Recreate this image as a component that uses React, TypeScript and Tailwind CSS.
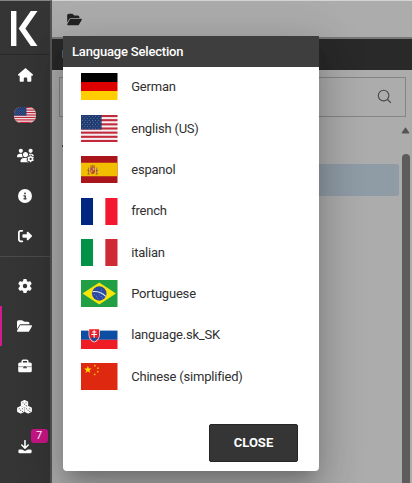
import React from "react";
import { FaHouse, FaUsersGear, FaCircleInfo, FaRightFromBracket, FaGear, FaFolderOpen } from "react-icons/fa6";

function UsFlag({ className }: { className: string }) {
  return (
    <svg className={className} viewBox="0 0 36 27" preserveAspectRatio="none">
      <rect width="36" height="27" fill="#f4f0f1" />
      {[0, 1, 2, 3, 4, 5, 6].map((i) => (
        <rect key={i} y={(i * 2 * 27) / 13} width="36" height={27 / 13} fill="#c2293c" />
      ))}
      <rect width="20.3" height="14.5" fill="#1f3a70" />
      {[0, 1, 2, 3, 4, 5, 6].map((r) =>
        [0, 1, 2, 3, 4, 5].map((c) => (
          <circle key={`${r}-${c}`} cx={1.6 + c * 3.2 + (r % 2) * 1.5} cy={1.4 + r * 1.95} r="0.45" fill="#a9b7d2" />
        ))
      )}
    </svg>
  );
}

const flagClass = "block h-[27px] w-[36.5px] shrink-0";

function Bands({ colors, vertical }: { colors: string[]; vertical?: boolean }) {
  return (
    <svg className={flagClass} viewBox="0 0 36 27" preserveAspectRatio="none">
      {colors.map((c, i) =>
        vertical ? (
          <rect key={i} x={i * 12} width="12" height="27" fill={c} />
        ) : (
          <rect key={i} y={i * 9} width="36" height="9" fill={c} />
        )
      )}
    </svg>
  );
}

function SpainFlag() {
  return (
    <svg className={flagClass} viewBox="0 0 36 27" preserveAspectRatio="none">
      <rect width="36" height="27" fill="#aa151b" />
      <rect y="6.75" width="36" height="13.5" fill="#f1bf00" />
      <path d="M9.2 11.3h4.6v4.2q0 2.4-2.3 2.7-2.3-.3-2.3-2.7z" fill="#b5483a" />
      <path d="M9.3 10.8l-.4-1.3 1.5.2 1.1-1 1.1 1 1.5-.2-.4 1.3z" fill="#a8622a" />
      <rect x="11.6" y="12" width="1.6" height="2.2" fill="#c9a5a0" />
      <rect x="9.8" y="14.3" width="1.5" height="2" fill="#d59b31" />
      <path d="M7.4 11.6v6.2M15.5 11.6v6.2" stroke="#9c7468" strokeWidth="1.1" />
      <path d="M6.3 14.3l2 .8M14.7 15.1l2-.8M6.5 18h2M14.5 18h2" stroke="#a63a2d" strokeWidth=".9" />
    </svg>
  );
}

function BrazilFlag() {
  return (
    <svg className={flagClass} viewBox="0 0 36 27" preserveAspectRatio="none">
      <rect width="36" height="27" fill="#229e45" />
      <path d="M1.5 13.5L18 2.6l16.5 10.9L18 24.4z" fill="#f8e509" />
      <circle cx="18" cy="13.5" r="7.2" fill="#2b49a3" />
      <path d="M11.4 11.6q7.7-.8 13 4.8" fill="none" stroke="#dbe8e8" strokeWidth="1.1" />
      <path d="M13 14.8h.8M14.8 16.2h.8M16.2 18.2h.8M19.4 16.5h.8M21 18h.8M18 14.7h.7M20 10.3h.7" stroke="#aebadb" strokeWidth=".7" />
    </svg>
  );
}

function SlovakFlag() {
  return (
    <svg className={flagClass} viewBox="0 0 36 27" preserveAspectRatio="none">
      <rect width="36" height="9" fill="#fff" />
      <rect y="8.6" width="36" height="9.2" fill="#0b4ea2" />
      <rect y="17.8" width="36" height="9.2" fill="#ee1c25" />
      <path d="M7.5 6.7h11v6q0 5.3-5.5 7.9-5.5-2.6-5.5-7.9z" fill="#fff" />
      <path d="M8.1 7.2h9.8v5.6q0 4.8-4.9 7-4.9-2.2-4.9-7z" fill="#ee1c25" />
      <path d="M9.7 16.6q1.2-1.8 2.2-.9 1.1-1.4 2.2 0 1-.9 2.2.9-1 1.7-3.3 2.9-2.3-1.2-3.3-2.9z" fill="#0b4ea2" />
      <path d="M13 8.2v7.5M10.9 10h4.2M10.2 12.5h5.6" stroke="#fff" strokeWidth="1.1" />
    </svg>
  );
}

function ChinaFlag() {
  return (
    <svg className={flagClass} viewBox="0 0 36 27" preserveAspectRatio="none">
      <rect width="36" height="27" fill="#df2810" />
      <path d="M6.8 2.8l.9 2.7h2.9L8.3 7.2l.9 2.7-2.4-1.7-2.4 1.7.9-2.7L3 5.5h2.9z" fill="#ffde00" />
      <g fill="#f8bd08">
        <circle cx="13.7" cy="2.7" r=".9" />
        <circle cx="16.7" cy="5.2" r=".9" />
        <circle cx="16.5" cy="8.7" r=".9" />
        <circle cx="13.5" cy="11.4" r=".9" />
      </g>
    </svg>
  );
}

const languages = [
  { name: "German", flag: <Bands colors={["#000", "#dd0000", "#ffce00"]} /> },
  { name: "english (US)", flag: <UsFlag className={flagClass} /> },
  { name: "espanol", flag: <SpainFlag /> },
  { name: "french", flag: <Bands vertical colors={["#00267f", "#fff", "#f31830"]} /> },
  { name: "italian", flag: <Bands vertical colors={["#009246", "#fff", "#ce2b37"]} /> },
  { name: "Portuguese", flag: <BrazilFlag /> },
  { name: "language.sk_SK", flag: <SlovakFlag /> },
  { name: "Chinese (simplified)", flag: <ChinaFlag /> },
];

function Briefcase() {
  return (
    <svg className="h-[14px] w-[14px]" viewBox="0 0 14 14">
      <path d="M4.2 4V2.2q0-1 1-1h3.6q1 0 1 1V4" fill="none" stroke="#fff" strokeWidth="1.5" />
      <path d="M1.7 3.4h10.6q1.5 0 1.5 1.5v2.6H.2V4.9q0-1.5 1.5-1.5zM.2 8.1h5v1.2h3.6V8.1h5v3.6q0 1.5-1.5 1.5H1.7q-1.5 0-1.5-1.5z" fill="#fff" />
      <path d="M.2 7.8h13.6" stroke="#bbb" strokeWidth=".7" />
      <rect x="6.1" y="7.1" width="1.8" height="1.4" fill="#555" />
    </svg>
  );
}

function Cubes() {
  return (
    <svg className="h-[14px] w-[15px]" viewBox="0 0 15 14">
      {[[7.5, 3.8], [3.8, 9.8], [11.2, 9.8]].map(([x, y]) => (
        <g key={x} transform={`translate(${x} ${y})`}>
          <path d="M0-3.3L3.1-1.8v3.6L0 3.3-3.1 1.8v-3.6z" fill="#fff" stroke="#fff" strokeWidth="1.1" strokeLinejoin="round" />
          <path d="M-2-1h.9M1.1-1H2M-.5.4h.9M1.6 1.2v.9" fill="none" stroke="#333" strokeWidth=".9" />
        </g>
      ))}
    </svg>
  );
}

function Download() {
  return (
    <svg className="h-[14px] w-[14px]" viewBox="0 0 14 14">
      <path d="M7 .7v7M3.8 5L7 8.2 10.2 5" fill="none" stroke="#fff" strokeWidth="1.6" strokeLinecap="round" strokeLinejoin="round" />
      <path d="M1.6 9.4h2.5L7 11l2.9-1.6h2.5q1.2 0 1.2 1.2v1.5q0 1.2-1.2 1.2H1.6Q.4 13.3.4 12.1v-1.5q0-1.2 1.2-1.2z" fill="#fff" />
    </svg>
  );
}

function NavItem({ children, active }: { children: React.ReactNode; active?: boolean }) {
  return (
    <div className={`flex h-[40.4px] shrink-0 items-center justify-center border-l-2 pr-[2px] ${active ? "border-[#d21b8d]" : "border-transparent"}`}>
      {children}
    </div>
  );
}

export default function App() {
  return (
    <div className="relative flex h-[483px] w-[412px] overflow-hidden bg-[#acacac] font-[Roboto,sans-serif]">
      <aside className="flex w-[52px] shrink-0 flex-col border-t border-r-2 border-t-[#858585] border-r-[#555] bg-[#353535] text-white">
        <div className="h-[53.5px] shrink-0 border-b border-[#292929] pt-[10px] pl-[11px]">
          <svg className="h-[35px] w-[27px]" viewBox="0 0 27 35">
            <path d="M0 0h5.4v35H0zM19.8 0h6.7L14.4 17.5 26.5 35h-6.7L7.7 17.5z" fill="#fff" />
          </svg>
        </div>
        <NavItem><FaHouse className="h-[14px] w-[15px]" /></NavItem>
        <NavItem>
          <div className="h-[16px] w-[22px] overflow-hidden rounded-[7px]">
            <UsFlag className="block h-full w-full" />
          </div>
        </NavItem>
        <NavItem><FaUsersGear className="h-[15px] w-[17px]" /></NavItem>
        <NavItem><FaCircleInfo className="h-[14px] w-[14px]" /></NavItem>
        <NavItem><FaRightFromBracket className="h-[14px] w-[14px]" /></NavItem>
        <div className="mb-[8px] h-px shrink-0 bg-[#4b4b4b]" />
        <div className="flex flex-col pr-px">
          <NavItem><FaGear className="h-[14px] w-[14px]" /></NavItem>
          <NavItem active><FaFolderOpen className="h-[14px] w-[15px]" /></NavItem>
          <NavItem><Briefcase /></NavItem>
          <NavItem><Cubes /></NavItem>
          <NavItem>
            <div className="relative">
              <Download />
              <span className="absolute -top-[11px] left-[13px] flex h-[14px] w-[17px] items-center justify-center rounded-[3px] bg-[#c71585] text-[11px]">7</span>
            </div>
          </NavItem>
        </div>
      </aside>

      <main className="flex min-w-0 flex-1 flex-col">
        <div className="flex h-[37px] shrink-0 items-center border-t border-[#d2d5d2] pl-[15px] text-[#222]">
          <FaFolderOpen className="h-[13px] w-[15px]" />
        </div>
        <div className="h-[33px] shrink-0 border-t-2 border-[#777] bg-[#292929]">
          <div className="mt-[11px] ml-[10px] h-[8px] w-[2px] bg-[#49677c]" />
        </div>
        <div className="mt-[7px] mr-[6px] ml-[7px] flex h-[39.5px] shrink-0 items-center justify-end border border-[#858585] pr-[13px]">
          <svg className="h-[15px] w-[15px]" viewBox="0 0 15 15" fill="none" stroke="#454545" strokeWidth="1.1">
            <circle cx="6.6" cy="6.6" r="5.3" />
            <path d="M10.5 10.5l3.4 3.4" />
          </svg>
        </div>
        <div className="flex flex-1 justify-end">
          <div className="flex-1 pt-[28px] pl-[10px]">
            <div className="h-[2px] w-[2px] bg-[#444]" />
            <div className="mt-[17.5px] ml-[10px] h-[32px] rounded-[3px] bg-[#8f9ba5]" />
          </div>
          <div className="flex w-[13px] flex-col items-center pt-[10px]">
            <svg className="h-[7px] w-[9px] shrink-0" viewBox="0 0 9 7">
              <path d="M4.5.8L8 6H1z" fill="#555" stroke="#555" strokeLinejoin="round" />
            </svg>
            <div className="mt-[20px] w-[8px] flex-1 rounded-t-[4px] bg-[#5c5c5c]" />
          </div>
        </div>
      </main>

      <section className="absolute top-[36px] left-[63px] flex h-[435px] w-[256px] flex-col overflow-hidden rounded-b-[4px] bg-white shadow-[0_11px_15px_-7px_rgba(0,0,0,0.2),0_24px_38px_3px_rgba(0,0,0,0.14),0_9px_46px_8px_rgba(0,0,0,0.12)]">
        <h1 className="flex h-[31px] shrink-0 items-center bg-[#3e3e3e] pl-[9px] text-[13px] font-medium tracking-[-0.18px] text-white">Language Selection</h1>
        <ul className="-mt-[0.8px] pl-[18.4px]">
          {languages.map((l) => (
            <li key={l.name} className="flex h-[41.4px] items-center gap-[13.3px] text-[13px] text-[#303030]">
              {l.flag}
              <span className="tracking-[-0.2px]">{l.name}</span>
            </li>
          ))}
        </ul>
        <button className="mt-auto mr-[21px] mb-[9.5px] h-[38px] w-[89px] self-end rounded-[2px] border border-[#242424] bg-[#353535] text-[13px] font-bold text-white">CLOSE</button>
      </section>
    </div>
  );
}
